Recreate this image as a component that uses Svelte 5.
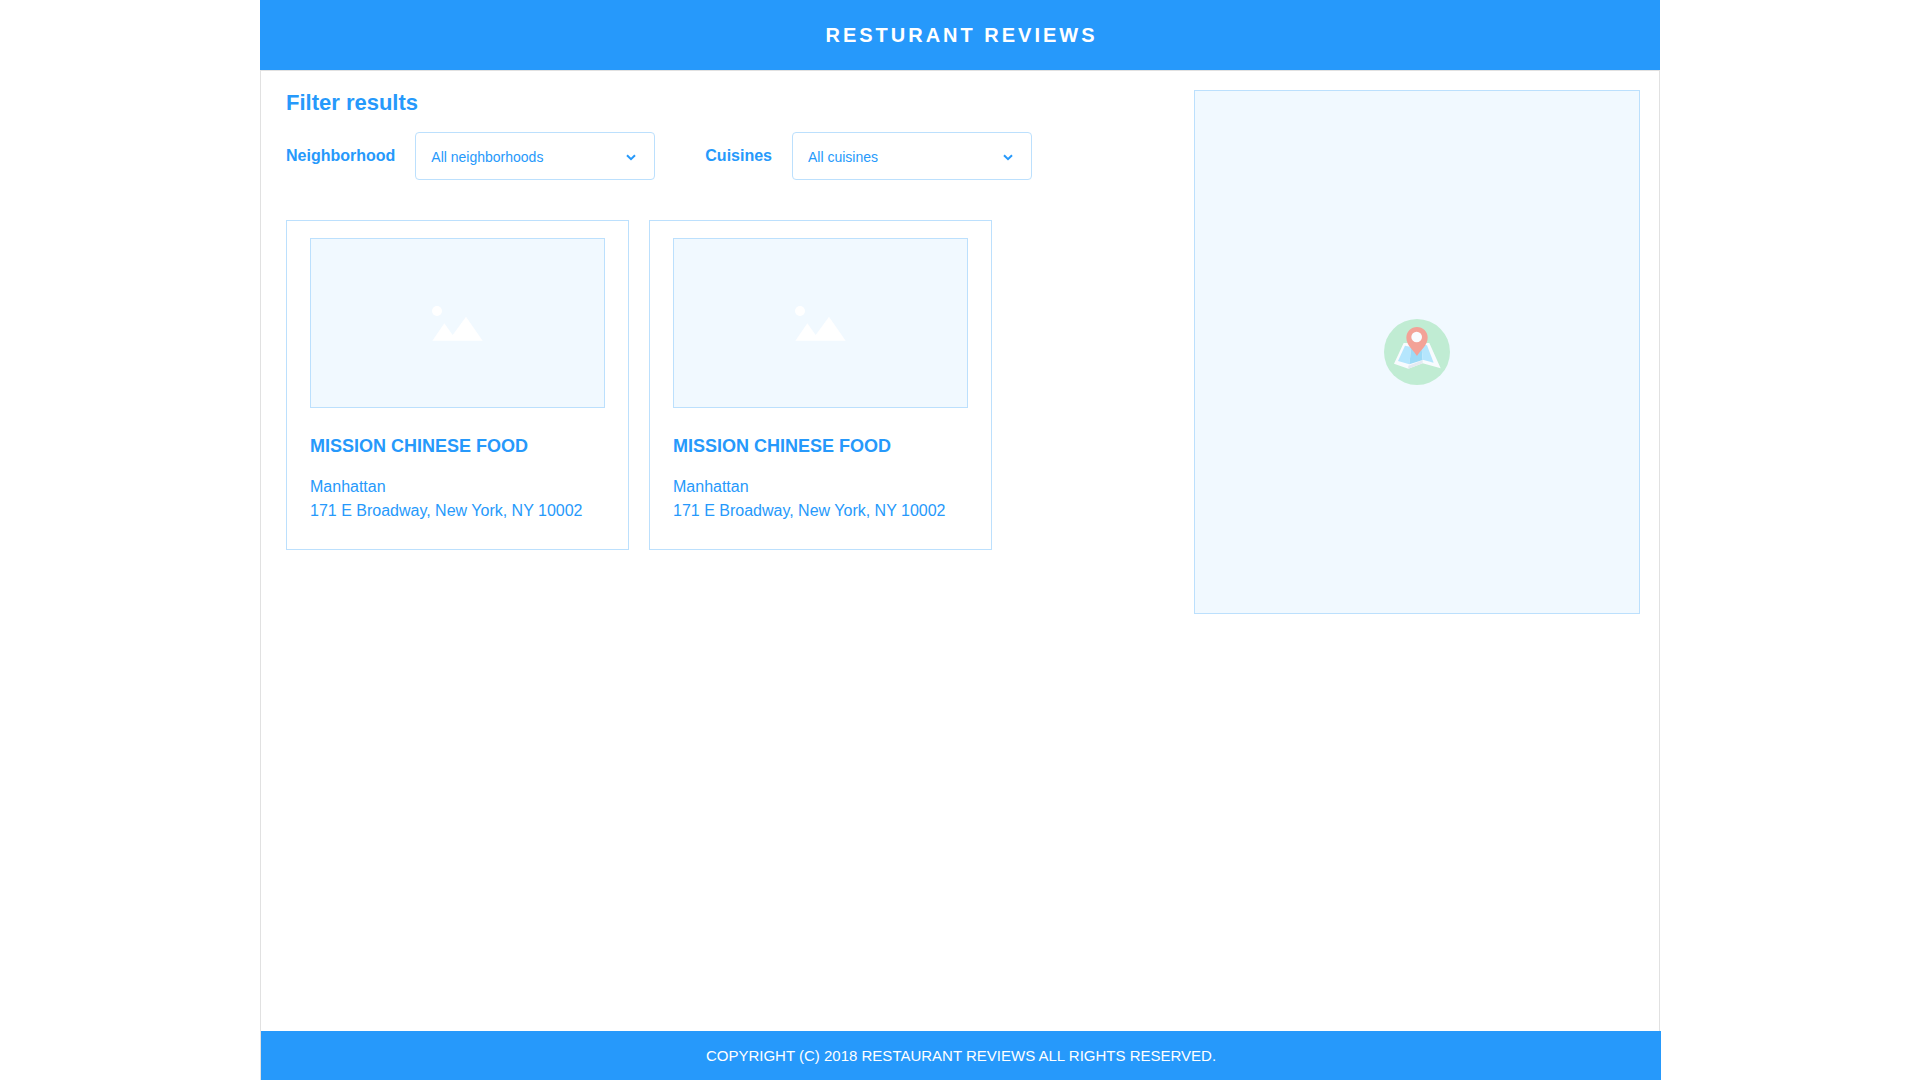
<script lang="ts">
  const filters = [
    { id: 'neighborhood', label: 'Neighborhood', all: 'All neighborhoods', options: ['Manhattan', 'Brooklyn', 'Queens'] },
    { id: 'cuisine', label: 'Cuisines', all: 'All cuisines', options: ['Asian', 'Pizza', 'American', 'Mexican'] }
  ];

  const restaurants = [
    { name: 'MISSION CHINESE FOOD', area: 'Manhattan', address: '171 E Broadway, New York, NY 10002' },
    { name: 'MISSION CHINESE FOOD', area: 'Manhattan', address: '171 E Broadway, New York, NY 10002' }
  ];
</script>

<div class="page">
  <header>
    <h1>RESTURANT REVIEWS</h1>
  </header>

  <div class="frame">
    <main>
      <section class="results">
        <h2>Filter results</h2>
        <div class="filters">
          {#each filters as f}
            <div class="filter">
              <label for={f.id}>{f.label}</label>
              <div class="select">
                <select id={f.id}>
                  <option value="">{f.all}</option>
                  {#each f.options as o}
                    <option>{o}</option>
                  {/each}
                </select>
                <svg class="chevron" viewBox="0 0 10 7" aria-hidden="true">
                  <path d="M1 1.2 L5 5.2 L9 1.2" />
                </svg>
              </div>
            </div>
          {/each}
        </div>

        <div class="cards">
          {#each restaurants as r}
            <article>
              <div class="photo">
                <svg viewBox="36 47 153 105" aria-hidden="true">
                  <circle cx="51" cy="62" r="15" />
                  <path d="M37 151 L73 99 L98 134 L138 79 L188 151 Z" />
                </svg>
              </div>
              <h3>{r.name}</h3>
              <p>{r.area}</p>
              <p>{r.address}</p>
            </article>
          {/each}
        </div>
      </section>

      <aside class="map" aria-label="Map">
        <svg viewBox="0 0 198 198" aria-hidden="true">
          <circle cx="99" cy="99" r="99" fill="#c0ecd3" />
          <path d="M59 72 L136 72 L170 148 L116 133 L73 149 L30 134 Z" fill="#f8fbfe" />
          <path d="M73 140 L116 124 L116 133 L73 149 Z" fill="#e4eaf1" />
          <path d="M63 80 L82 84 L76 136 L42 126 Z" fill="#b5e6fd" />
          <path d="M82 84 L112 76 L116 123 L76 136 Z" fill="#9cdaf6" />
          <path d="M112 76 L129 79 L149 131 L116 122 Z" fill="#b5e6fd" />
          <path d="M99 111 C93 98 67 80 67 56 A32 32 0 0 1 131 56 C131 80 105 98 99 111 Z" fill="#f3a297" />
          <circle cx="98" cy="54" r="16" fill="#f9fbfe" />
        </svg>
      </aside>
    </main>

    <footer>COPYRIGHT (C) 2018 RESTAURANT REVIEWS ALL RIGHTS RESERVED.</footer>
  </div>
</div>

<style>
  :global(body) {
    background: #fff;
    font-family: "Liberation Sans", Arial, sans-serif;
    color: #2699fb;
  }

  h1, h2, h3, p {
    margin: 0;
  }

  .page {
    max-width: 1400px;
    min-height: 100vh;
    margin: 0 auto;
    display: flex;
    flex-direction: column;
  }

  header {
    background: #2699fb;
    color: #fff;
    padding: 23px 20px;
    text-align: center;
  }

  /* the indent balances the letter spacing after the last letter */
  h1 {
    font-size: 20px;
    line-height: 24px;
    letter-spacing: 3px;
    text-indent: 3px;
  }

  .frame {
    flex: 1;
    display: flex;
    flex-direction: column;
    border: 1px solid #e1e1e1;
    border-bottom: 0;
  }

  main {
    flex: 1;
    display: flex;
    align-items: flex-start;
    justify-content: space-between;
    gap: 20px;
    padding: 19px 19px 40px 25px;
  }

  .results {
    flex: 1;
  }

  h2 {
    font-size: 22px;
    line-height: 26px;
    margin-bottom: 16px;
  }

  .filters {
    display: flex;
    flex-wrap: wrap;
    gap: 20px 50px;
    margin-bottom: 40px;
  }

  .filter {
    display: flex;
    align-items: center;
    gap: 20px;
  }

  label {
    font-size: 16px;
    line-height: 24px;
    font-weight: bold;
  }

  .select {
    position: relative;
    width: 240px;
  }

  select {
    display: block;
    width: 100%;
    height: 48px;
    padding: 2px 40px 0 15px;
    appearance: none;
    background: #fff;
    border: 1px solid #bce0fd;
    border-radius: 4px;
    color: #2699fb;
    font: 14px/16px "Liberation Sans", Arial, sans-serif;
  }

  .chevron {
    position: absolute;
    right: 19px;
    top: 22px;
    width: 10px;
    height: 7px;
    fill: none;
    stroke: #2699fb;
    stroke-width: 2;
    pointer-events: none;
  }

  .cards {
    display: flex;
    flex-wrap: wrap;
    gap: 20px;
  }

  article {
    box-sizing: border-box;
    width: 343px;
    border: 1px solid #bce0fd;
    padding: 17px 23px 26px;
  }

  .photo {
    box-sizing: border-box;
    height: 170px;
    display: flex;
    align-items: center;
    justify-content: center;
    background: #f1f9ff;
    border: 1px solid #bce0fd;
    margin-bottom: 26px;
  }

  .photo svg {
    width: 51px;
    height: 35px;
    fill: #fff;
  }

  h3 {
    font-size: 18px;
    line-height: 24px;
    margin-bottom: 17px;
  }

  p {
    font-size: 16px;
    line-height: 24px;
  }

  .map {
    box-sizing: border-box;
    width: 446px;
    height: 524px;
    display: flex;
    align-items: center;
    justify-content: center;
    background: #f1f9ff;
    border: 1px solid #bce0fd;
  }

  .map svg {
    width: 66px;
    height: 66px;
  }

  footer {
    background: #2699fb;
    color: #fff;
    margin-right: -2px;
    padding: 17px 20px 16px;
    font-size: 15px;
    line-height: 16px;
    text-align: center;
  }
</style>
